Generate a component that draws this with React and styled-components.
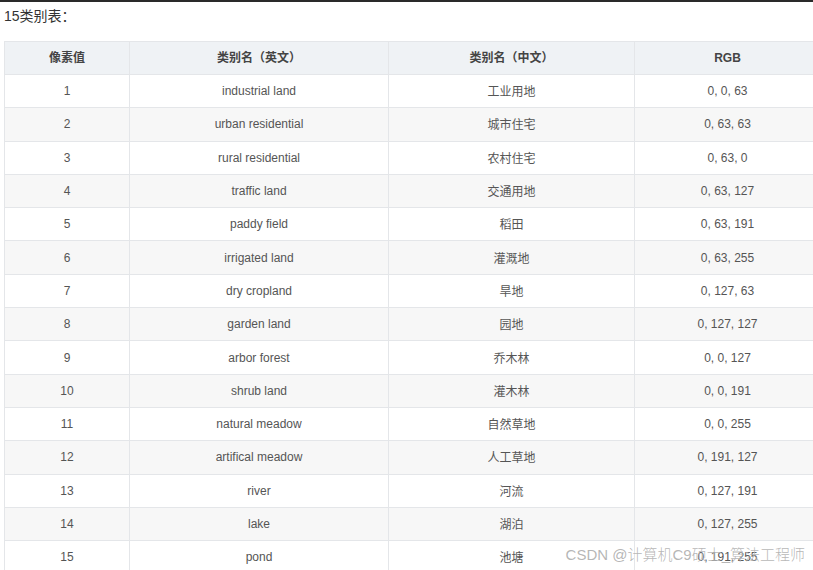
import React from "react";
import styled, { createGlobalStyle } from "styled-components";

const GlobalStyle = createGlobalStyle`
  html, body {
    margin: 0;
    padding: 0;
    background: #ffffff;
    overflow: hidden;
  }
  body {
    font-family: "Liberation Sans", "Noto Sans CJK SC", sans-serif;
  }
`;

const Page = styled.div`
  position: relative;
  width: 813px;
  height: 570px;
  overflow: hidden;
  border-top: 2px solid #2a2a2a;
  box-sizing: border-box;
`;

const Title = styled.p`
  margin: 0;
  padding: 4px 0 0 4px;
  height: 39px;
  box-sizing: border-box;
  font-size: 14px;
  color: #333;
  line-height: 20px;
`;

const Table = styled.table`
  margin-left: 4px;
  width: 816px;
  border-collapse: collapse;
  table-layout: fixed;
  font-size: 12px;
  line-height: 16px;
  color: #555;
  border-top: 1px solid #e4e6e9;
`;

const HeadCell = styled.th`
  height: 32px;
  padding: 0;
  background: #eff2f5;
  border: 1px solid #e4e6e9;
  border-top: none;
  font-weight: bold;
  color: #444;
  text-align: center;
  vertical-align: middle;
`;

const Row = styled.tr`
  background: ${(p) => (p.$striped ? "#f7f7f7" : "#ffffff")};
`;

const Cell = styled.td`
  height: 32.3px;
  padding: 0;
  border: 1px solid #e4e6e9;
  text-align: center;
  vertical-align: middle;
`;

const Han = styled.span`
  display: inline-block;
  line-height: 16px;
  position: relative;
  top: 1px;
`;

const Watermark = styled.div`
  position: absolute;
  right: 8px;
  bottom: 6px;
  font-size: 15px;
  font-weight: 300;
  color: rgba(150, 150, 150, 0.7);
  text-shadow: 0 0 1px rgba(255, 255, 255, 0.8);
  white-space: nowrap;
`;

const rows = [
  ["1", "industrial land", "工业用地", "0, 0, 63"],
  ["2", "urban residential", "城市住宅", "0, 63, 63"],
  ["3", "rural residential", "农村住宅", "0, 63, 0"],
  ["4", "traffic land", "交通用地", "0, 63, 127"],
  ["5", "paddy field", "稻田", "0, 63, 191"],
  ["6", "irrigated land", "灌溉地", "0, 63, 255"],
  ["7", "dry cropland", "旱地", "0, 127, 63"],
  ["8", "garden land", "园地", "0, 127, 127"],
  ["9", "arbor forest", "乔木林", "0, 0, 127"],
  ["10", "shrub land", "灌木林", "0, 0, 191"],
  ["11", "natural meadow", "自然草地", "0, 0, 255"],
  ["12", "artifical meadow", "人工草地", "0, 191, 127"],
  ["13", "river", "河流", "0, 127, 191"],
  ["14", "lake", "湖泊", "0, 127, 255"],
  ["15", "pond", "池塘", "0, 191, 255"],
];

export default function App() {
  return (
    <Page>
      <GlobalStyle />
      <Title>15类别表：</Title>
      <Table>
        <colgroup>
          <col style={{ width: 125 }} />
          <col style={{ width: 259 }} />
          <col style={{ width: 246 }} />
          <col style={{ width: 186 }} />
        </colgroup>
        <thead>
          <tr>
            <HeadCell>像素值</HeadCell>
            <HeadCell>类别名（英文）</HeadCell>
            <HeadCell>类别名（中文）</HeadCell>
            <HeadCell>RGB</HeadCell>
          </tr>
        </thead>
        <tbody>
          {rows.map((r, i) => (
            <Row key={r[0]} $striped={i % 2 === 1}>
              <Cell>{r[0]}</Cell>
              <Cell>{r[1]}</Cell>
              <Cell>
                <Han>{r[2]}</Han>
              </Cell>
              <Cell>{r[3]}</Cell>
            </Row>
          ))}
        </tbody>
      </Table>
      <Watermark>CSDN @计算机C9硕士_算法工程师</Watermark>
    </Page>
  );
}
